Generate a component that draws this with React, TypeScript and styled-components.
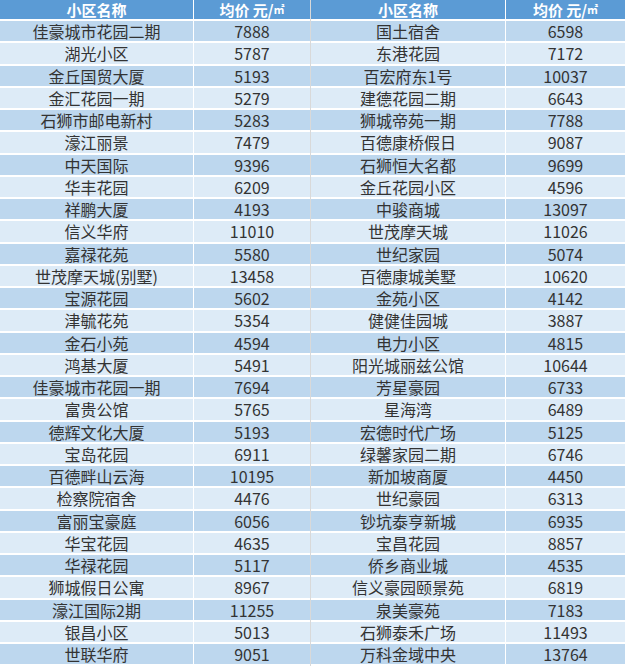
import styled, { createGlobalStyle } from "styled-components"

const GlobalStyle = createGlobalStyle`
    html, body {
        margin: 0;
        padding: 0;
        background: #fff;
    }
    body {
        font-family: "Noto Sans CJK SC", "Noto Sans", sans-serif;
    }
`

const left: [string, number][] = [
    ["佳豪城市花园二期", 7888],
    ["湖光小区", 5787],
    ["金丘国贸大厦", 5193],
    ["金汇花园一期", 5279],
    ["石狮市邮电新村", 5283],
    ["濠江丽景", 7479],
    ["中天国际", 9396],
    ["华丰花园", 6209],
    ["祥鹏大厦", 4193],
    ["信义华府", 11010],
    ["嘉禄花苑", 5580],
    ["世茂摩天城(别墅)", 13458],
    ["宝源花园", 5602],
    ["津毓花苑", 5354],
    ["金石小苑", 4594],
    ["鸿基大厦", 5491],
    ["佳豪城市花园一期", 7694],
    ["富贵公馆", 5765],
    ["德辉文化大厦", 5193],
    ["宝岛花园", 6911],
    ["百德畔山云海", 10195],
    ["检察院宿舍", 4476],
    ["富丽宝豪庭", 6056],
    ["华宝花园", 4635],
    ["华禄花园", 5117],
    ["狮城假日公寓", 8967],
    ["濠江国际2期", 11255],
    ["银昌小区", 5013],
    ["世联华府", 9051],
]

const right: [string, number][] = [
    ["国土宿舍", 6598],
    ["东港花园", 7172],
    ["百宏府东1号", 10037],
    ["建德花园二期", 6643],
    ["狮城帝苑一期", 7788],
    ["百德康桥假日", 9087],
    ["石狮恒大名都", 9699],
    ["金丘花园小区", 4596],
    ["中骏商城", 13097],
    ["世茂摩天城", 11026],
    ["世纪家园", 5074],
    ["百德康城美墅", 10620],
    ["金苑小区", 4142],
    ["健健佳园城", 3887],
    ["电力小区", 4815],
    ["阳光城丽兹公馆", 10644],
    ["芳星豪园", 6733],
    ["星海湾", 6489],
    ["宏德时代广场", 5125],
    ["绿馨家园二期", 6746],
    ["新加坡商厦", 4450],
    ["世纪豪园", 6313],
    ["钞坑泰亨新城", 6935],
    ["宝昌花园", 8857],
    ["侨乡商业城", 4535],
    ["信义豪园颐景苑", 6819],
    ["泉美豪苑", 7183],
    ["石狮泰禾广场", 11493],
    ["万科金域中央", 13764],
]

const Sheet = styled.div`
    width: 625px;
    height: 666px;
    display: flex;
    background: #fff;
    overflow: hidden;
`
const Divider = styled.div`
    width: 2px;
    background: #d9d9d9;
`
const Half = styled.div<{ $cols: string }>`
    display: grid;
    grid-template-columns: ${p => p.$cols};
    grid-template-rows: 19px;
    grid-auto-rows: 20.25px;
    column-gap: 1px;
    row-gap: 2px;
    align-content: start;
`
const HeadCell = styled.div`
    background: #5b9bd5;
    color: #fff;
    font-weight: bold;
    font-size: 15px;
    line-height: 19px;
    text-align: center;
    white-space: nowrap;
`
const Unit = styled.span`
    font-size: 11px;
    vertical-align: 2px;
`
const Cell = styled.div<{ $dark: boolean }>`
    background: ${p => (p.$dark ? "#bdd7ee" : "#ddebf7")};
    color: #333;
    font-size: 16px;
    line-height: 20.25px;
    text-align: center;
    white-space: nowrap;
`

function Block({ rows, cols }: { rows: [string, number][]; cols: string }) {
    return (
        <Half $cols={cols}>
            <HeadCell>小区名称</HeadCell>
            <HeadCell>均价 元/<Unit>㎡</Unit></HeadCell>
            {rows.map(([name, price], i) => [
                <Cell key={name + "n"} $dark={i % 2 === 0}>{name}</Cell>,
                <Cell key={name + "p"} $dark={i % 2 === 0}>{price}</Cell>,
            ])}
        </Half>
    )
}

export default function App() {
    return (
        <>
            <GlobalStyle />
            <Sheet>
                <Block rows={left} cols="193px 116px" />
                <Divider />
                <Block rows={right} cols="194px 119px" />
            </Sheet>
        </>
    )
}
